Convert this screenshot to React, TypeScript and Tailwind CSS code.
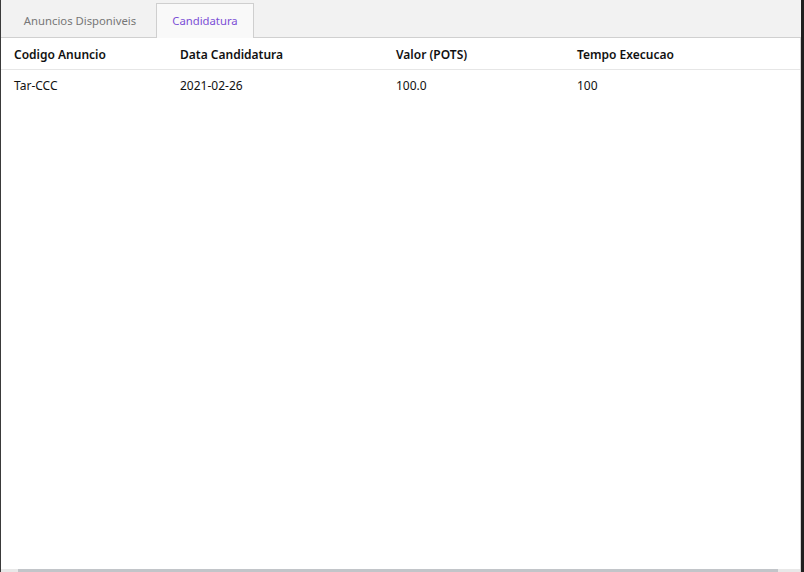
import React from "react";

const cols = [
  { x: "w-[166px]", h: "Codigo Anuncio", v: "Tar-CCC" },
  { x: "w-[216px]", h: "Data Candidatura", v: "2021-02-26" },
  { x: "w-[181px]", h: "Valor (POTS)", v: "100.0" },
  { x: "flex-1", h: "Tempo Execucao", v: "100" },
];

export default function App() {
  return (
    <div
      className="w-[804px] h-[572px] flex bg-[#1f1f1f] overflow-hidden"
      style={{ fontFamily: '"Segoe UI", "Noto Sans", "Open Sans", sans-serif' }}
    >
      <div className="w-[1px] bg-[#3a3a3a]" />
      <div className="w-[800px] flex flex-col bg-white">
        <div className="h-[38px] bg-[#f2f2f2] border-b border-[#d0d0d0] flex items-end pl-[9px] relative">
          <div className="h-[35px] w-[146px] flex items-center justify-center text-[11.3px] text-[#777] mb-[-1px] pt-[1px] pr-[6px]">
            Anuncios Disponiveis
          </div>
          <div className="h-[35px] w-[98px] flex items-center justify-center text-[11.3px] text-[#7c4fd6] bg-[#f9f9f9] border border-b-0 border-[#cfcfcf] mb-[-1px] pt-[1px]">
            Candidatura
          </div>
        </div>
        <div className="flex-1 flex flex-col border-r border-[#d4d4d4] text-[12px] text-[#111]">
          <div className="h-[32px] flex items-center pl-[13px] pt-[2px] border-b border-[#e6e6e6] font-semibold">
            {cols.map((c) => (
              <div key={c.h} className={c.x}>
                {c.h}
              </div>
            ))}
          </div>
          <div className="h-[30px] flex items-center pl-[13px] pt-[2px]">
            {cols.map((c) => (
              <div key={c.h} className={c.x}>
                {c.v}
              </div>
            ))}
          </div>
          <div className="flex-1" />
          <div className="h-[3px] bg-[#e8e8e8] flex pl-[17px] pr-[22px]">
            <div className="flex-1 bg-[#c2c5c9]" />
          </div>
        </div>
      </div>
      <div className="flex-1" />
    </div>
  );
}
